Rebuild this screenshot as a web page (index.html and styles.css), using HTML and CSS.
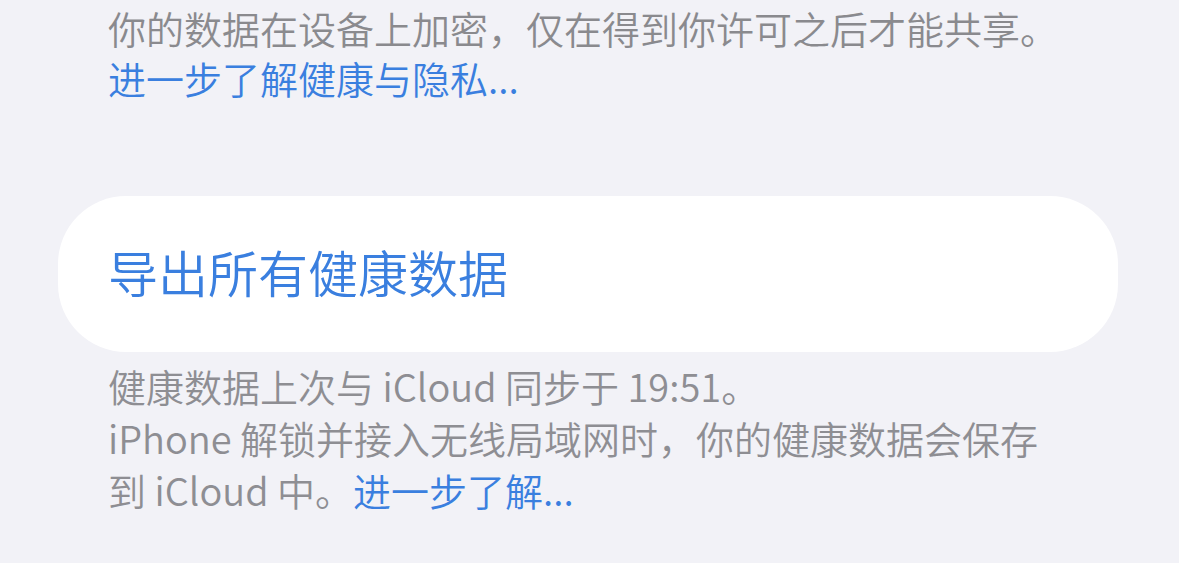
FILE: index.html
```html
<!DOCTYPE html>
<html>
<head>
    <meta charset="UTF-8">
    <meta name="viewport" content="width=device-width, initial-scale=1.0">
    <link rel="stylesheet" href="styles.css">
</head>
<body>
    <div class="page">
        <p class="note note-top">
            你的数据在设备上加密，仅在得到你许可之后才能共享。
            <a class="link link-block" href="#">进一步了解健康与隐私...</a>
        </p>

        <div class="card">
            <a class="card-action" href="#">导出所有健康数据</a>
        </div>

        <p class="note note-bottom">
            健康数据上次与 iCloud 同步于 19:51。<br>
            iPhone 解锁并接入无线局域网时，你的健康数据会保存<br>
            到 iCloud 中。<a class="link" href="#">进一步了解...</a>
        </p>
    </div>
</body>
</html>
```

FILE: styles.css
```css
body {
    margin: 0;
    background-color: #f2f2f7;
    font-family: "Noto Sans CJK SC", "Noto Sans", sans-serif;
}
.page {
    display: flex;
    flex-direction: column;
}
.note {
    margin: 0;
    padding: 0 60px 0 108px;
    font-size: 38px;
    font-weight: 350;
    white-space: nowrap;
}
.note-top {
    line-height: 56px;
    color: #8a8a8e;
}
.note-bottom {
    margin-top: 8px;
    line-height: 52px;
    color: #8e8e93;
}
.link {
    color: #3a7fdf; /* iOS 蓝色链接 */
    text-decoration: none;
}
.link-block {
    display: block;
    margin-top: -2px;
    line-height: 48px;
}
.card {
    display: flex;
    align-items: center;
    height: 150px;
    margin: 94px 61px 0 58px;
    padding: 0 0 6px 50px;
    background-color: #fff;
    border-radius: 68px;
}
.card-action {
    font-size: 50px;
    font-weight: 350;
    color: #3a7fdf;
    text-decoration: none;
}
```
